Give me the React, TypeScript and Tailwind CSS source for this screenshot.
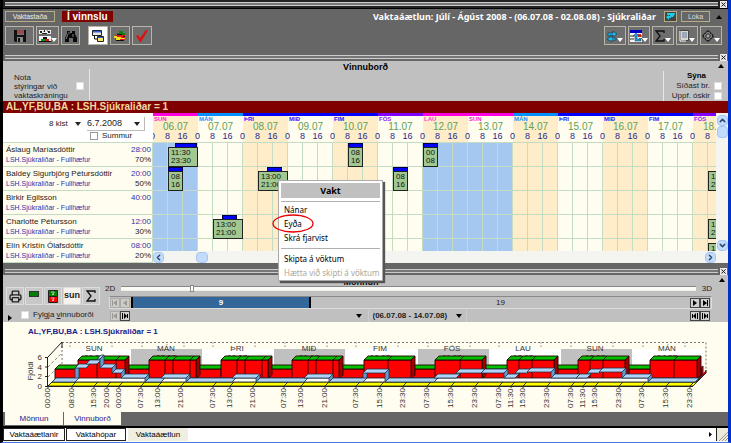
import type { ReactNode } from "react";
import { ChevronDown, ChevronLeft, ChevronRight, ChevronUp, Printer } from "lucide-react";

type Shift = { from: number; to: number; barFrom?: number; barTo?: number; label: [string, string] };

const days = [
  { name: "SUN", date: "06.07", bar: "bg-[#ff00e0]", text: "text-[#ff20d0]", weekend: true },
  { name: "MÁN", date: "07.07", bar: "bg-[#0090ff]", text: "text-[#2090ff]" },
  { name: "ÞRI", date: "08.07", bar: "bg-[#0000ff]", text: "text-[#2020ff]" },
  { name: "MIÐ", date: "09.07", bar: "bg-[#0000ff]", text: "text-[#2020ff]" },
  { name: "FIM", date: "10.07", bar: "bg-[#0000ff]", text: "text-[#2020ff]" },
  { name: "FÖS", date: "11.07", bar: "bg-[#8000ff]", text: "text-[#9020ff]" },
  { name: "LAU", date: "12.07", bar: "bg-[#ff00e0]", text: "text-[#ff40d0]", weekend: true },
  { name: "SUN", date: "13.07", bar: "bg-[#ff00e0]", text: "text-[#ff20d0]", weekend: true },
  { name: "MÁN", date: "14.07", bar: "bg-[#0090ff]", text: "text-[#2090ff]" },
  { name: "ÞRI", date: "15.07", bar: "bg-[#0000ff]", text: "text-[#2020ff]" },
  { name: "MIÐ", date: "16.07", bar: "bg-[#0000ff]", text: "text-[#2020ff]" },
  { name: "FIM", date: "17.07", bar: "bg-[#0000ff]", text: "text-[#2020ff]" },
  { name: "FÖS", date: "18.07", bar: "bg-[#8000ff]", text: "text-[#9020ff]" },
];

const evening: Shift = { from: 8, to: 24, barFrom: 13, barTo: 21, label: ["13:00", "21:00"] };
const morning: Shift = { from: 8, to: 16, barFrom: 8, barTo: 16, label: ["08", "16"] };
const hidden: Shift = { from: 8, to: 24, label: ["13:00", "21:00"] };

const staff: { name: string; hours: string; percent: string; shifts: Record<string, Shift> }[] = [
  {
    name: "Áslaug Maríasdóttir",
    hours: "28:00",
    percent: "70%",
    shifts: {
      "06.07": { from: 8, to: 24, barFrom: 11.5, barTo: 23.5, label: ["11:30", "23:30"] },
      "10.07": morning,
      "12.07": { from: 0, to: 8, barFrom: 0, barTo: 8, label: ["00", "08"] },
    },
  },
  {
    name: "Baldey Sigurbjörg Pétursdóttir",
    hours: "20:00",
    percent: "50%",
    shifts: { "06.07": morning, "08.07": evening, "11.07": morning, "18.07": hidden },
  },
  { name: "Birkir Egilsson", hours: "40:00", percent: "", shifts: {} },
  {
    name: "Charlotte Pétursson",
    hours: "12:00",
    percent: "30%",
    shifts: { "07.07": evening, "18.07": hidden },
  },
  { name: "Elín Kristín Ólafsdóttir", hours: "08:00", percent: "20%", shifts: { "18.07": hidden } },
];

const Triangle = ({ className = "" }: { className?: string }) => (
  <svg viewBox="0 0 6 4" className={`h-1 w-1.5 shrink-0 ${className}`} aria-hidden="true">
    <path d="M0 0h6L3 4z" fill="currentColor" />
  </svg>
);

const UpArrow = () => <Triangle className="rotate-180 text-black" />;

const Splitter = ({ bg = "bg-[#666]" }: { bg?: string }) => (
  <div className={`flex h-2 items-center gap-0.5 pl-0.5 pr-px ${bg}`}>
    <div className="h-1 flex-1 border-y border-[#ccc] bg-[#777]" />
    <button
      aria-label="Loka glugga"
      className="flex h-[7px] w-[7px] items-center justify-center border border-[#eee] bg-[#ddd]"
    >
      <svg viewBox="0 0 5 5" className="h-[5px] w-[5px]">
        <path d="M.5.5l4 4m0-4l-4 4" stroke="#222" />
      </svg>
    </button>
  </div>
);

const ToolButton = ({
  label,
  width = "w-[20px]",
  bg = "bg-[#6e6e6e]",
  drop = false,
  children,
}: {
  label: string;
  width?: string;
  bg?: string;
  drop?: boolean;
  children: ReactNode;
}) => (
  <button
    aria-label={label}
    className={`flex h-[19px] items-center justify-center border border-[#b8b4a8] ${width} ${bg}`}
  >
    {children}
    {drop && <Triangle className="mt-2 text-white" />}
  </button>
);

const Toolbar = () => (
  <header className="bg-[#666] pl-[2px] pr-1.5 pb-2">
    <div className="flex items-center justify-between pt-0.5">
      <div className="flex items-center gap-[7px]">
        <button className="h-[11px] w-[50px] border border-[#b8ac84] text-[7px] leading-[9px] text-[#eee]">
          Vaktastaða
        </button>
        <span className="h-[11px] bg-[#800000] px-[5px] text-[10px] font-bold leading-[11px] text-white">
          Í vinnslu
        </span>
      </div>
      <div className="flex items-center">
        <h1 className="mr-2 font-['Noto_Sans'] text-[9px] font-bold leading-[11px] text-white">
          Vaktaáætlun: Júlí - Ágúst 2008 - (06.07.08 - 02.08.08) - Sjúkraliðar
        </h1>
        <button
          aria-label="Til baka"
          className="mr-1 flex h-[11px] w-[13px] items-center justify-center border border-[#b8ac84] bg-[#444]"
        >
          <svg viewBox="0 0 11 9" className="h-[9px] w-[11px]">
            <path d="M2 1h8v1L8 5H6v1H4v2L1 5l3-2v1h1V3H2z" fill="#20c8e8" />
          </svg>
        </button>
        <button className="h-[11px] w-[29px] border border-[#b8ac84] text-[7px] leading-[9px] text-[#ddd]">Loka</button>
        <span className="ml-1.5">
          <UpArrow />
        </span>
      </div>
    </div>
    <div className="mt-1 flex items-center justify-between">
      <div className="flex gap-[2px]">
        <ToolButton label="Vista" width="w-[29px]">
          <svg viewBox="0 0 12 12" className="h-3 w-3">
            <path d="M0 0h12v12H1L0 11z" fill="#111" />
            <path d="M3 0h7v5H3z" fill="#777" />
            <path d="M3 1h7M3 3h7" stroke="#c02020" />
            <path d="M3 7h6v5H3z" fill="#8a8a8a" />
            <path d="M4 8h2v4H4z" fill="#111" />
          </svg>
        </ToolButton>
        <ToolButton label="Starfsmenn" width="w-[23px]" drop>
          <svg viewBox="0 0 12 14" className="h-3.5 w-3">
            <path d="M0 1h12v4H0z" fill="#eee" />
            <path d="M1 2h2v2H1zM5 1h1v2H5zM9 2h2v2H9zM3 4h5v1H3z" fill="#222" />
            <path d="M4 2h1v1H4zM8 1h1v2H8z" fill="#c89030" />
            <path d="M0 7h12v6H0z" fill="#f4f4f4" />
            <path d="M4 8h4v2H4z" fill="#111" />
            <path d="M2 10h4v2H2z" fill="#109010" />
            <path d="M6 10h4v2H6z" fill="#e01010" />
            <path d="M0 12h12v1H0z" fill="#111" />
          </svg>
        </ToolButton>
        <ToolButton label="Leita" width="w-[19px]">
          <svg viewBox="0 0 12 12" className="h-3 w-3">
            <path d="M2 1h3v2h2V1h3v3l2 4v4H8V8H4v4H0V8l2-4z" fill="#0a0a0a" />
            <path d="M3 4L1 9M8 4v3M4 2v2" stroke="#999" strokeWidth=".8" />
          </svg>
        </ToolButton>
        <span className="w-1" />
        <ToolButton label="Gluggar" bg="bg-white">
          <svg viewBox="0 0 14 12" className="h-3 w-3.5">
            <path d="M1.5.5h9v5h-9z" fill="#e8e8e0" stroke="#222" />
            <path d="M2 1h8v1.500H2z" fill="#3060e0" />
            <path d="M6.500 6.500h6v5h-6z" fill="#ffe860" stroke="#222" />
            <path d="M7 7h5v1H7z" fill="#3060e0" />
            <path d="M3.500 6v3H6" stroke="#111" fill="none" />
          </svg>
        </ToolButton>
        <ToolButton label="Mönnun">
          <svg viewBox="0 0 12 12" className="h-3 w-3">
            <path d="M3 3h2V1h4v2h2v4H3z" fill="#108010" />
            <path d="M1 5h10v5H1z" fill="#e01818" />
            <path d="M0 6h3v1h4v1h4v1H6v1H2V8H0z" fill="#f0e020" />
            <path d="M3 4h5v1H3zM2 10h8v1H2zM9 6h2v1H9z" fill="#111" />
          </svg>
        </ToolButton>
        <ToolButton label="Samþykkja">
          <svg viewBox="0 0 12 12" className="h-3 w-3">
            <path d="M0 6l2-1 2 3 6-8 2 0-7 12H4z" fill="#e01010" />
          </svg>
        </ToolButton>
      </div>
      <div className="flex gap-[2px]">
        <ToolButton label="Uppfæra" width="w-[22px]" drop>
          <svg viewBox="0 0 10 12" className="h-3 w-2.5">
            <path d="M1 3h5V1l4 3-4 3V5H3v1H1z" fill="#20b8e8" stroke="#053850" strokeWidth=".6" />
            <path d="M9 8H5V6L0 9l5 3v-2h4z" fill="#20b8e8" stroke="#053850" strokeWidth=".6" />
          </svg>
        </ToolButton>
        <ToolButton label="Tafla" width="w-[22px]" drop>
          <svg viewBox="0 0 12 12" className="h-3 w-3">
            <path d="M0 0h12v12H0z" fill="#f4f4f4" />
            <path d="M0 0h12v3H0z" fill="#0000c0" />
            <path d="M0 6h4M0 9h4M8 6h4" stroke="#333" />
            <path d="M8 4h3v3H8z" fill="#e02020" />
            <path d="M9 8h3v1H9z" fill="#20a020" />
            <path d="M6 3l3 3H7v3h4v2H5V6H3z" fill="#20a0e0" stroke="#103050" strokeWidth=".5" />
          </svg>
        </ToolButton>
        <ToolButton label="Summa" width="w-[22px]" drop>
          <svg viewBox="0 0 10 12" className="h-3 w-2.5">
            <path d="M9 3V1H1l4 5-4 5h8V9" fill="none" stroke="#111" strokeWidth="1.400" />
          </svg>
        </ToolButton>
        <ToolButton label="Skýrslur" width="w-[22px]" drop>
          <svg viewBox="0 0 10 12" className="h-3 w-2.5">
            <path d="M1.500.5h8v10h-8z" fill="#d8d8d0" stroke="#444" />
            <path d="M3 3h5M3 5h5M3 7h5" stroke="#6078a0" />
            <path d="M1 1v10h6" stroke="#fff" fill="none" />
          </svg>
        </ToolButton>
        <ToolButton label="Stillingar" width="w-[22px]" drop>
          <svg viewBox="0 0 12 12" className="h-3 w-3">
            <path d="M6 .5L11.500 6 6 11.500.5 6z" fill="#888" stroke="#111" strokeWidth="1.300" strokeDasharray="2 .6" />
            <path d="M6 3.500L8.500 6 6 8.500 3.500 6z" fill="#aaa" stroke="#111" />
          </svg>
        </ToolButton>
      </div>
    </div>
  </header>
);

const WorkPanel = () => (
  <section className="flex h-10 bg-[#c0c0c0] text-[#222]">
    <div className="mb-px mt-2 flex w-[87px] items-end border-r border-[#e8e8e8] pl-[11px]">
      <label htmlFor="controls" className="w-[62px] text-[8px] leading-[9px]">
        Nota
        <br />
        stýringar við
        <br />
        vaktaskráningu
      </label>
      <input id="controls" type="checkbox" className="mb-2.5 h-2 w-2 appearance-none border border-[#ddd] bg-white" />
    </div>
    <h2 className="flex-1 pr-[22px] text-center text-[9px] font-bold leading-[12px] text-black">Vinnuborð</h2>
    <div className="flex w-[65px] flex-col pr-1.5">
      <span className="ml-auto -mr-0.5 flex h-2.5 items-center">
        <UpArrow />
      </span>
      <div className="border-l border-[#e8e8e8] pb-px text-right">
        <h3 className="pr-4 text-[8px] font-bold leading-[10px] text-black">Sýna</h3>
        <label className="flex items-center justify-end gap-1 text-[8px] leading-[9px]">
          Síðast br.
          <input type="checkbox" className="h-2 w-2 appearance-none border border-[#ddd] bg-white" />
        </label>
        <label className="mt-px flex items-center justify-end gap-1 text-[8px] leading-[9px]">
          Uppf. óskir
          <input type="checkbox" className="h-2 w-2 appearance-none border border-[#ddd] bg-white" />
        </label>
      </div>
    </div>
  </section>
);

const HOUR = 45 / 24;

const ShiftBox = ({ shift }: { shift: Shift }) => (
  <>
    {shift.barFrom !== undefined && shift.barTo !== undefined && (
      <div
        className="absolute top-0 z-[1] h-[5px] border border-[#000040] bg-[#0000ff]"
        style={{ left: shift.barFrom * HOUR, width: (shift.barTo - shift.barFrom) * HOUR }}
      />
    )}
    <div
      className="absolute top-1 z-[1] h-5 overflow-hidden border border-[#222] bg-[#a0c890] pl-0.5 text-[8px] leading-[8px] text-[#111]"
      style={{ left: shift.from * HOUR, width: (shift.to - shift.from) * HOUR }}
    >
      <div className="mt-px">{shift.label[0]}</div>
      <div>{shift.label[1]}</div>
    </div>
  </>
);

const DayColumn = ({ day, index }: { day: (typeof days)[number]; index: number }) => {
  const tint = index % 2 === 0 ? "bg-[#feedc8]" : "bg-[#fffdf0]";
  return (
    <div className={`w-[45px] shrink-0 ${tint}`}>
      <div className="h-[30px] border-b border-[#c4dcc4]">
        <div className={`h-[3px] ${day.bar}`} />
        <div className={`pl-px text-[6px] font-bold leading-[6px] ${day.text}`}>{day.name}</div>
        <div className="text-center text-[10px] leading-[10px] text-[#60a058]">{day.date}</div>
        <div className="-ml-2 grid grid-cols-[15px_15px_15px] text-center text-[9px] leading-[8px] text-[#282888]">
          <span>0</span>
          <span>8</span>
          <span>16</span>
        </div>
      </div>
      {staff.map((person) => (
        <div
          key={person.name}
          className={`relative grid h-6 grid-cols-3 border-b border-[#c4dcc4] ${day.weekend ? "bg-[#a4c8f0]" : ""}`}
        >
          <span className="border-r border-[#c4dcc4]" />
          <span className="border-r border-[#c4dcc4]" />
          <span className="border-r border-[#c4dcc4]" />
          {person.shifts[day.date] && <ShiftBox shift={person.shifts[day.date]} />}
        </div>
      ))}
    </div>
  );
};

const ScrollButton = ({ label, children }: { label: string; children: ReactNode }) => (
  <button
    aria-label={label}
    className="flex h-[11px] w-[11px] shrink-0 items-center justify-center rounded-sm border border-[#a8c4f0] bg-[#c4dcfc] text-[#304870]"
  >
    {children}
  </button>
);

const ContextMenu = () => (
  <div className="absolute left-[275px] top-[67px] z-10 w-[105px] border border-[#aaa] bg-white p-0.5 pb-0 font-['Noto_Sans',sans-serif] text-[8px] text-black shadow-[2px_2px_1px_#555]">
    <div className="mb-[3px] h-[15px] bg-[#c0c0c0] text-center text-[9px] font-bold leading-[15px]">Vakt</div>
    <hr className="mb-px border-[#b0b0b0]" />
    <div className="flex flex-col items-start pl-[3px]">
      <button className="h-[14px] leading-[14px]">Nánar</button>
      <button className="relative h-[14px] leading-[14px]">
        Eyða
        <svg viewBox="0 0 42 19" className="absolute -left-3 -top-[3px] h-[19px] w-[42px] max-w-none" aria-hidden="true">
          <ellipse cx="21" cy="9.500" rx="20" ry="8.500" fill="none" stroke="#e80000" strokeWidth="1.300" />
        </svg>
      </button>
      <button className="h-[14px] leading-[14px]">Skrá fjarvist</button>
    </div>
    <hr className="my-[3px] border-[#b0b0b0]" />
    <div className="flex flex-col items-start pl-[3px]">
      <button className="h-[14px] leading-[14px]">Skipta á vöktum</button>
      <button disabled className="h-[14px] whitespace-nowrap leading-[14px] text-[#aca899]">
        Hætta við skipti á vöktum
      </button>
    </div>
  </div>
);

const Schedule = () => (
  <section className="relative flex h-[150px] bg-[#fffdf0]">
    <div className="w-[150px] shrink-0">
      <div className="flex h-[30px] flex-col border-b border-[#c4dcc4] bg-white text-[#222]">
        <div className="mt-1 flex h-[14px] items-center pl-[46px]">
          <div className="flex w-[38px] items-center">
            <select aria-label="Vaktalengd" className="w-[26px] appearance-none bg-transparent text-[8px]">
              <option>8 klst</option>
            </select>
            <Triangle />
          </div>
          <div className="flex w-[58px] items-center border-b border-r border-[#bbb] pr-1">
            <select aria-label="Dagsetning" className="w-full appearance-none bg-transparent text-[9px]">
              <option>6.7.2008</option>
            </select>
            <Triangle />
          </div>
        </div>
        <label className="flex items-center gap-1 pl-[87px] text-[8px] leading-[10px]">
          <input type="checkbox" className="h-2 w-2 appearance-none border border-[#999] bg-white" />
          Summur
        </label>
      </div>
      {staff.map((person) => (
        <div
          key={person.name}
          className="flex h-6 justify-between border-b border-r border-[#c4dcc4] pl-[3px] pr-px text-[8px]"
        >
          <div className="whitespace-nowrap">
            <div className="pt-px leading-[11px] text-[#222]">{person.name}</div>
            <div className="text-[7px] leading-[9px] text-[#3030a8]">LSH.Sjúkraliðar - Fullhæfur</div>
          </div>
          <div className="text-right">
            <div className="pt-px leading-[11px] text-[#3030a8]">{person.hours}</div>
            <div className="leading-[10px] text-[#222]">{person.percent}</div>
          </div>
        </div>
      ))}
    </div>
    <div className="flex min-w-0 flex-1 flex-col">
      <div className="flex h-[138px] overflow-hidden">
        {days.map((day, i) => (
          <DayColumn key={day.date} day={day} index={i} />
        ))}
      </div>
      <div className="flex h-3 items-center justify-between bg-[#f4f4f0]">
        <ScrollButton label="Til vinstri">
          <ChevronLeft size={9} strokeWidth={4} />
        </ScrollButton>
        <div className="ml-8 h-[11px] w-3 rounded-sm border border-[#a8c4f0] bg-[#c4dcfc]" />
        <span className="flex-1" />
        <ScrollButton label="Til hægri">
          <ChevronRight size={9} strokeWidth={4} />
        </ScrollButton>
      </div>
    </div>
    <div className="flex w-3 flex-col items-center bg-[#f4f4f0] pb-3 pt-0.5">
      <ScrollButton label="Upp">
        <ChevronUp size={9} strokeWidth={4} />
      </ScrollButton>
      <div className="h-3 w-[11px] rounded-sm border border-[#a8c4f0] bg-[#c4dcfc]" />
      <span className="flex-1" />
      <ScrollButton label="Niður">
        <ChevronDown size={9} strokeWidth={4} />
      </ScrollButton>
    </div>
    <ContextMenu />
  </section>
);

const NavButton = ({ label, path, off = false }: { label: string; path: string; off?: boolean }) => (
  <button
    aria-label={label}
    disabled={off}
    className={`flex h-[10px] w-[10px] items-center justify-center border ${
      off ? "border-[#aaa] bg-[#d0cdc4] text-[#999]" : "border-[#444] bg-[#d0d0d0] text-black"
    }`}
  >
    <svg viewBox="0 0 6 6" className="h-1.5 w-1.5">
      <path d={path} fill="currentColor" />
    </svg>
  </button>
);

const first = "M0 0h1v6H0zM5 0v6L1 3z";
const prev = "M5 0v6L1 3z";
const next = "M1 0v6l4-3z";
const last = "M5 0h1v6H5zM1 0v6l4-3z";

const IconTile = ({ label, bg = "bg-[#c8c8c8]", children }: { label: string; bg?: string; children: ReactNode }) => (
  <button
    aria-label={label}
    className={`flex h-[18px] w-[18px] items-center justify-center border border-[#ddd] text-[9px] font-bold text-[#222] ${bg}`}
  >
    {children}
  </button>
);

const StaffingPanel = () => (
  <section className="bg-[#c0c0c0]">
    <div className="flex h-[9px] items-center pr-[3px]">
      <h2 className="mt-1 flex-1 text-center text-[9px] font-bold leading-[10px] text-black">Mönnun</h2>
      <UpArrow />
    </div>
    <div className="flex h-[38px] pr-4">
      <div className="w-[102px] shrink-0 pl-[3px] pt-[3px]">
        <div className="flex gap-px">
          <IconTile label="Prenta">
            <Printer size={13} strokeWidth={2.5} />
          </IconTile>
          <IconTile label="Grænt">
            <span className="mb-1 h-1.5 w-2.5 border border-[#333] bg-[#008000]" />
          </IconTile>
          <IconTile label="Grænt og rautt">
            <svg viewBox="0 0 10 13" className="h-[13px] w-2.5">
              <path d="M.5.5h9v6h-9z" fill="#008000" stroke="#222" />
              <path d="M.5 6.500h9v6h-9z" fill="#ff0000" stroke="#222" />
              <path d="M3 2h3v1L4 4.500h2M3 8h3v1L4 10.500h2" stroke="#ddd" fill="none" strokeWidth=".8" />
            </svg>
          </IconTile>
          <IconTile label="Sunnudagur" bg="bg-[#f4f2ea]">
            sun
          </IconTile>
          <IconTile label="Summa">
            <svg viewBox="0 0 10 12" className="h-3 w-2.5">
              <path d="M9 3V1H1l4 5-4 5h8V9" fill="none" stroke="#111" strokeWidth="1.300" />
            </svg>
          </IconTile>
        </div>
        <div className="mt-1 flex items-center">
          <svg viewBox="0 0 4 6" className="ml-0.5 mt-1.5 h-1.5 w-1">
            <path d="M0 0v6l4-3z" />
          </svg>
          <label className="ml-[9px] flex items-center gap-1 whitespace-nowrap text-[8px] leading-[10px] text-[#222]">
            <input type="checkbox" className="h-2 w-2 appearance-none border border-[#ddd] bg-white" />
            <span>
              Fylgja <u>v</u>innuborði
            </span>
          </label>
        </div>
      </div>
      <div className="min-w-0 flex-1">
        <div className="flex h-[10px] items-center gap-1.5 text-[8px] leading-[10px] text-[#222]">
          <span>2D</span>
          <input
            type="range"
            aria-label="Vídd"
            defaultValue={12}
            className="h-1 min-w-0 flex-1 appearance-none border-b border-[#eee] bg-[#fbfaf4] shadow-[0_-1px_0_#888] [&::-webkit-slider-thumb]:h-[7px] [&::-webkit-slider-thumb]:w-1 [&::-webkit-slider-thumb]:appearance-none [&::-webkit-slider-thumb]:border [&::-webkit-slider-thumb]:border-[#888] [&::-webkit-slider-thumb]:bg-white"
          />
          <span>3D</span>
        </div>
        <div className="ml-1 mt-0.5 flex h-[13px] items-center border border-[#ddd] border-t-[#888] pr-px text-[8px]">
          <NavButton label="Fyrsta" path={first} off />
          <NavButton label="Fyrri" path={prev} off />
          <span className="ml-px flex h-full w-[30%] items-center justify-center border-x-2 border-black bg-[#336699] font-bold text-white">
            9
          </span>
          <span className="flex-1 text-center text-[#222]">19</span>
          <NavButton label="Næsta" path={next} />
          <NavButton label="Síðasta" path={last} />
        </div>
        <div className="ml-[5px] mt-px flex h-3 items-center pr-0.5">
          <NavButton label="Minnka" path={first} off />
          <NavButton label="Stækka" path="M0 0h1v6H0zM2 0v6l3-3zM5 1h1v4H5z" />
          <div className="flex flex-1 items-center justify-center pr-1">
            <span className="px-1.5">
              <Triangle />
            </span>
            <div className="flex items-center border-x border-[#ccc] px-1">
              <select aria-label="Tímabil" className="appearance-none bg-transparent text-[8px] font-bold text-[#222]">
                <option>(06.07.08 - 14.07.08)</option>
              </select>
              <Triangle className="ml-2" />
            </div>
          </div>
          <NavButton label="Til baka um dag" path="M5 0h1v6H5zM4 0v6L1 3zM0 1h1v4H0z" />
          <NavButton label="Áfram um dag" path="M0 0h1v6H0zM2 0v6l3-3zM5 1h1v4H5z" />
        </div>
      </div>
    </div>
  </section>
);

const chartDays: [number, string, string][] = [
  [94, "SUN", "06.07"],
  [166, "MÁN", "07.07"],
  [237, "ÞRI", "08.07"],
  [309, "MIÐ", "09.07"],
  [380, "FIM", "10.07"],
  [452, "FÖS", "11.07"],
  [523, "LAU", "12.07"],
  [595, "SUN", "13.07"],
  [667, "MÁN", "14.07"],
];

const times: [number, string][] = [
  [48, "00:00"], [72, "08:00"], [94, "15:30"], [107, "20:00"], [119, "00:00"], [141, "07:30"],
  [158, "13:00"], [181, "21:00"], [213, "07:30"], [230, "13:00"], [253, "21:00"], [284, "07:30"],
  [301, "13:00"], [325, "21:00"], [356, "07:30"], [380, "15:30"], [403, "23:30"], [427, "07:30"],
  [451, "15:30"], [475, "23:30"], [499, "07:30"], [511, "11:30"], [523, "15:30"], [547, "23:30"],
  [571, "07:30"], [583, "11:30"], [595, "15:30"], [619, "23:30"], [642, "07:30"], [666, "15:30"],
  [690, "23:30"],
];

// x where the full block of each day starts, and the inner seams of that block
const blocks: [number, number[]][] = [
  [78, [19, 38]],
  [149, [16, 24, 41]],
  [221, [16, 24, 41]],
  [292, [16, 24, 41]],
  [364, [24]],
  [435, [25]],
  [507, [12, 25]],
  [578, [12, 25]],
  [650, [24]],
];

// ribbon steps: from x, to x, y of the front edge
const ribbon: [number, number, number][] = [
  [52, 75, 383], [75, 86, 369], [86, 97, 365], [97, 100, 360], [100, 112, 369], [112, 121, 374],
  [121, 145, 379], [145, 161, 383], [161, 186, 379], [186, 232, 383], [232, 256, 379], [256, 304, 383],
  [304, 329, 379], [329, 363, 383], [363, 385, 374], [385, 434, 383], [434, 456, 379], [456, 481, 374],
  [481, 504, 374], [504, 515, 379], [515, 527, 374], [527, 551, 373], [551, 576, 379], [576, 587, 379],
  [587, 599, 374], [599, 622, 373], [622, 648, 379], [648, 695, 383],
];

const Block = ({ x, w, top, seams = [] }: { x: number; w: number; top: number; seams?: number[] }) => (
  <g stroke="#200" strokeWidth=".9">
    <path d={`M${x + w} ${top}l4 -4V376l-4 4z`} fill="#a00000" />
    <path d={`M${x} ${top}h${w}V380H${x}z`} fill="#ff0000" />
    <path d={`M${x} ${top}l4 -4h${w}l-4 4z`} fill="#00c000" />
    {seams.map((s) => (
      <path key={s} d={`M${x + s} 380V${top}l4 -4`} fill="none" />
    ))}
  </g>
);

const StaffingChart = () => (
  <section className="bg-[#fffdf0] pt-1">
    <h2 className="pl-[25px] text-[8px] font-bold leading-[11px] text-[#202088]">AL,YF,BU,BA : LSH.Sjúkraliðar = 1</h2>
    <svg viewBox="3 338 725 75" className="block h-auto w-full" fontFamily="Liberation Sans, sans-serif" fill="#333">
      {[62, 203, 346, 490, 632].map((x) => (
        <path key={x} d={`M${x} 350h71v20h-71z`} fill="#fff" />
      ))}
      {[131, 274, 418, 561].map((x) => (
        <path key={x} d={`M${x} 350h71v20h-71z`} fill="#c0c0c0" />
      ))}
      <path d="M62 343.500H706V373M62 343V373" stroke="#777" strokeDasharray="2 2" fill="none" />
      {chartDays.map(([x]) => (
        <path key={x} d={`M${x - 24} 343v6M${x + 18} 343v6`} stroke="#888" strokeDasharray="1.500 2" />
      ))}
      <path d="M48 368l14 -14M48 378l14 -14" stroke="#888" strokeDasharray="3 2" fill="none" />
      <path d="M48 358l14 -15v6" stroke="#222" fill="none" />
      {chartDays.map(([x, name, date]) => (
        <g key={x} textAnchor="middle">
          <text x={x} y="352" fontSize="8">
            {name}
          </text>
          <text x={x} y="361" fontSize="8">
            {date}
          </text>
        </g>
      ))}
      <path d="M693 387l13 -13v-3M698 380l5 -5v-8l-4 3z" fill="#c00000" stroke="#222" />
      <Block x={55} w={23} top={370} />
      {blocks.map(([x, seams], i) => (
        <g key={x}>
          {i < 8 && <Block x={x + 47} w={25} top={370} />}
          <Block x={x} w={47} top={361} seams={seams} />
        </g>
      ))}
      <path d="M48 387l4 -4H697l-4 4z" fill="#ff0" stroke="#330" strokeWidth=".9" />
      <path d="M52 383l4 -4H700l-4 4z" fill="#fff" stroke="#222" strokeWidth=".9" />
      {ribbon.map(([from, to, y], i) => {
        const after = ribbon[i + 1];
        return (
          <g key={from} stroke="#234" strokeWidth=".8">
            {after && after[2] !== y && <path d={`M${to} ${y}l4 -4V${after[2] - 4}l-4 4z`} fill="#6898d0" />}
            <path d={`M${from} ${y}l4 -4H${to + 4}l-4 4z`} fill="#b0d4fc" />
          </g>
        );
      })}
      {times.map(([x]) => (
        <path key={x} d={`M${x} 387l4 -4M${x} 387v2`} stroke="#222" strokeWidth=".9" />
      ))}
      <path d="M47.500 358V387.500H693M45 358.500h3M45 368h3M45 377.500h3M45 387.500h3" stroke="#222" fill="none" />
      <g fontSize="8" textAnchor="end">
        <text x="42" y="361">6</text>
        <text x="42" y="371">4</text>
        <text x="42" y="380">2</text>
        <text x="42" y="390">0</text>
      </g>
      <text transform="rotate(-90 33 372)" x="33" y="372" fontSize="8" textAnchor="middle">
        Fjöldi
      </text>
      {times.map(([x, label]) => (
        <text key={x} transform={`rotate(-90 ${x + 2} 409)`} x={x + 2} y="409" fontSize="8">
          {label}
        </text>
      ))}
    </svg>
  </section>
);

const App = () => {
  return (
    <div className="min-h-screen w-full overflow-hidden border-b border-l-[3px] border-r-[3px] border-b-[#4878e8] border-l-black border-r-[#0030c8] bg-[#fffdf0] font-['Liberation_Sans',sans-serif]">
      <div className="border-b border-black">
        <Splitter bg="bg-[#222]" />
      </div>
      <Toolbar />
      <Splitter />
      <WorkPanel />
      <h2 className="h-3 bg-[#800000] pl-[3px] text-[10px] font-bold leading-[12px] text-[#f0d8a0]">
        AL,YF,BU,BA : LSH.Sjúkraliðar = 1
      </h2>
      <Schedule />
      <div className="bg-[#666] pt-1">
        <Splitter />
      </div>
      <StaffingPanel />
      <StaffingChart />
      <nav className="flex h-[14px] gap-px bg-[#666] pb-px pl-0.5 text-center text-[8px] leading-[13px] text-[#202090]">
        <button className="w-[58px] bg-[#fffdf0]">Mönnun</button>
        <button className="w-[57px] bg-[#fffdf0]">Vinnuborð</button>
      </nav>
      <nav className="flex h-[15px] items-stretch border-t-2 border-black bg-white text-[8px] leading-[11px] text-black">
        <button className="w-[62px] border border-[#222]">Vaktaáætlanir</button>
        <button className="ml-px w-[60px] border border-[#222]">Vaktahópar</button>
        <button className="ml-0.5 w-[60px] bg-[#f0eee0]">Vaktaáætlun</button>
        <span className="flex-1" />
        <svg viewBox="0 0 3 5" className="mr-1 mt-1 h-[5px] w-[3px]">
          <path d="M0 0v5l3-2.500z" />
        </svg>
        <span className="w-3 border-l border-[#222] bg-[#ece9d8]">
          <svg viewBox="0 0 11 13" className="h-[13px] w-[11px]">
            <path d="M2 13l9-9M5 13l6-6M8 13l3-3" stroke="#999" />
          </svg>
        </span>
      </nav>
    </div>
  );
};

export default App;
